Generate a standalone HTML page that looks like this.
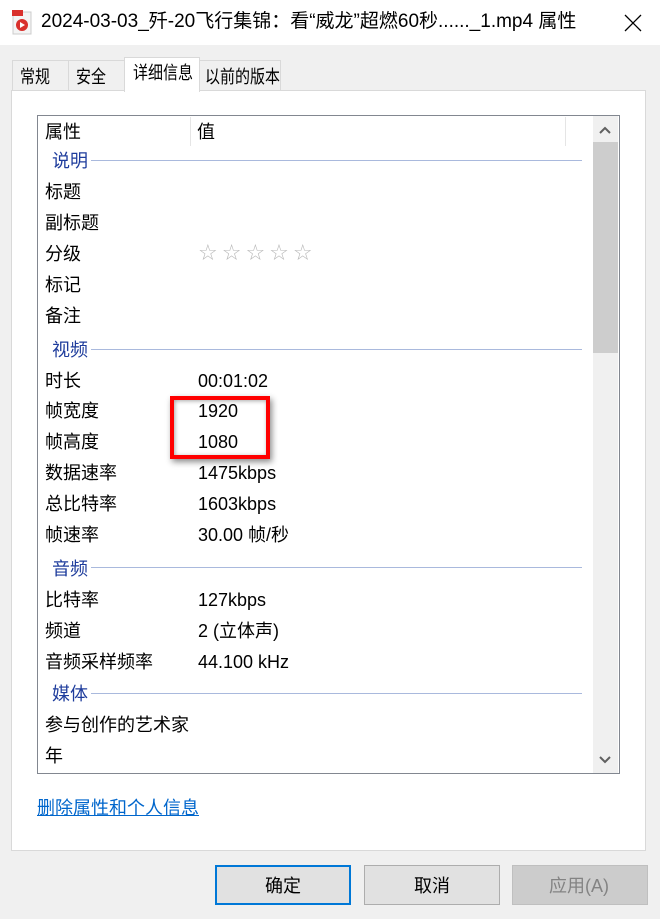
<!DOCTYPE html><html><head><meta charset="utf-8"><style>
*{margin:0;padding:0;box-sizing:border-box}
body{width:660px;height:919px;background:#f0f0f0;position:relative;overflow:hidden;font-family:"Liberation Sans","Noto Sans CJK SC",sans-serif;color:#000}
.a{position:absolute;white-space:nowrap}
.t{font-size:18px;line-height:20px}
.g{color:#1e3c9c}
.ln{position:absolute;height:1px;background:#a9b9dd}
.tb{font-size:15px;line-height:20px;transform:scaleY(1.2);transform-origin:0 0}
</style></head><body>
<div class="a" style="left:0;top:0;width:660px;height:45px;background:#fff"></div>
<svg class="a" style="left:12px;top:10px" width="22" height="26" viewBox="0 0 22 26"><rect x="1" y="2" width="18" height="22" fill="#f4f4f4" stroke="#ccc"/><rect x="0" y="0" width="11" height="6" fill="#d9302c"/><circle cx="10" cy="15" r="6" fill="#d9302c"/><path d="M8 12v6l5-3z" fill="#fff"/></svg>
<div class="a" style="left:41px;top:10px;font-size:19px;line-height:24px">2024-03-03_歼-20飞行集锦：看“威龙”超燃60秒......_1.mp4 属性</div>
<svg class="a" style="left:623px;top:13px" width="20" height="20"><path d="M2 2L18 18M18 2L2 18" stroke="#000" stroke-width="1.3"/></svg>

<div class="a" style="left:12px;top:60px;width:57px;height:31px;border:1px solid #d9d9d9;background:#f0f0f0"></div>
<div class="a tb" style="left:20px;top:66px">常规</div>
<div class="a" style="left:68px;top:60px;width:57px;height:31px;border:1px solid #d9d9d9;background:#f0f0f0"></div>
<div class="a tb" style="left:76px;top:66px">安全</div>
<div class="a" style="left:198px;top:60px;width:83px;height:31px;border:1px solid #d9d9d9;background:#f0f0f0"></div>
<div class="a tb" style="left:205px;top:66px">以前的版本</div>
<div class="a" style="left:11px;top:90px;width:635px;height:761px;background:#fff;border:1px solid #d9d9d9"></div>
<div class="a" style="left:124px;top:57px;width:76px;height:35px;background:#fff;border:1px solid #d9d9d9;border-bottom:none"></div>
<div class="a tb" style="left:133px;top:62px">详细信息</div>

<div class="a" style="left:37px;top:115px;width:583px;height:659px;border:1px solid #828790;background:#fff"></div>
<div class="a" style="left:190px;top:117px;width:1px;height:29px;background:#e5e5e5"></div>
<div class="a" style="left:565px;top:117px;width:1px;height:29px;background:#e5e5e5"></div>
<div class="a" style="left:593px;top:116px;width:25px;height:657px;background:#f0f0f0"></div>
<div class="a" style="left:593px;top:142px;width:25px;height:211px;background:#cdcdcd"></div>
<svg class="a" style="left:598px;top:124px" width="14" height="14"><path d="M2 9L7 4L12 9" stroke="#606060" stroke-width="2" fill="none"/></svg>
<svg class="a" style="left:598px;top:752px" width="14" height="14"><path d="M2 5L7 10L12 5" stroke="#606060" stroke-width="2" fill="none"/></svg>

<div class="a t" style="left:45px;top:122px">属性</div>
<div class="a t" style="left:197px;top:122px">值</div>

<div class="a t g" style="left:52px;top:151px">说明</div><div class="ln" style="left:91px;top:160px;width:491px"></div>
<div class="a t" style="left:45px;top:182px">标题</div>
<div class="a t" style="left:45px;top:213px">副标题</div>
<div class="a t" style="left:45px;top:244px">分级</div>
<div class="a" style="left:198px;top:241px;font-size:22px;color:#b8b8b8;letter-spacing:4px;font-family:'DejaVu Sans',sans-serif">☆☆☆☆☆</div>
<div class="a t" style="left:45px;top:275px">标记</div>
<div class="a t" style="left:45px;top:306px">备注</div>
<div class="a t g" style="left:52px;top:340px">视频</div><div class="ln" style="left:91px;top:349px;width:491px"></div>
<div class="a t" style="left:45px;top:371px">时长</div><div class="a t" style="left:198px;top:371px">00:01:02</div>
<div class="a t" style="left:45px;top:401px">帧宽度</div><div class="a t" style="left:198px;top:401px">1920</div>
<div class="a t" style="left:45px;top:432px">帧高度</div><div class="a t" style="left:198px;top:432px">1080</div>
<div class="a t" style="left:45px;top:463px">数据速率</div><div class="a t" style="left:198px;top:463px">1475kbps</div>
<div class="a t" style="left:45px;top:494px">总比特率</div><div class="a t" style="left:198px;top:494px">1603kbps</div>
<div class="a t" style="left:45px;top:525px">帧速率</div><div class="a t" style="left:198px;top:525px">30.00 帧/秒</div>
<div class="a t g" style="left:52px;top:559px">音频</div><div class="ln" style="left:91px;top:567px;width:491px"></div>
<div class="a t" style="left:45px;top:590px">比特率</div><div class="a t" style="left:198px;top:590px">127kbps</div>
<div class="a t" style="left:45px;top:621px">频道</div><div class="a t" style="left:198px;top:621px">2 (立体声)</div>
<div class="a t" style="left:45px;top:652px">音频采样频率</div><div class="a t" style="left:198px;top:652px">44.100 kHz</div>
<div class="a t g" style="left:52px;top:684px">媒体</div><div class="ln" style="left:91px;top:693px;width:491px"></div>
<div class="a t" style="left:45px;top:715px">参与创作的艺术家</div>
<div class="a t" style="left:45px;top:746px">年</div>

<div class="a" style="left:170px;top:396px;width:100px;height:63px;border:4px solid #ff0000;box-shadow:2px 3px 6px rgba(0,0,0,.45),inset 1px 1px 4px rgba(0,0,0,.35)"></div>

<div class="a t" style="left:37px;top:798px;color:#0066cc;text-decoration:underline">删除属性和个人信息</div>

<div class="a" style="left:215px;top:865px;width:136px;height:40px;border:2px solid #0078d7;background:#e1e1e1"></div>
<div class="a t" style="left:265px;top:876px">确定</div>
<div class="a" style="left:364px;top:865px;width:136px;height:40px;border:1px solid #adadad;background:#e1e1e1"></div>
<div class="a t" style="left:414px;top:876px">取消</div>
<div class="a" style="left:512px;top:865px;width:136px;height:40px;border:1px solid #bfbfbf;background:#cccccc"></div>
<div class="a t" style="left:549px;top:876px;color:#838383">应用(A)</div>
</body></html>
